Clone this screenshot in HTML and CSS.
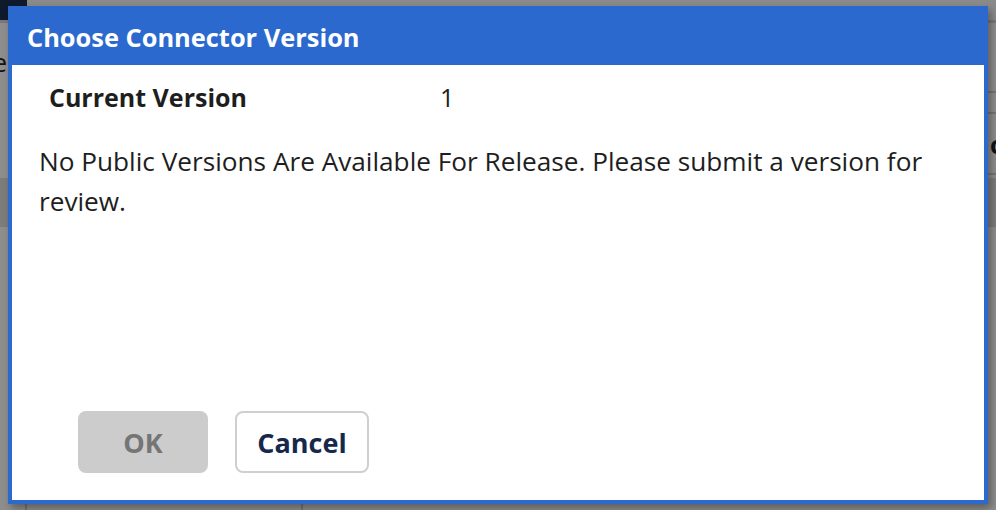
FILE: index.html
```html
<!DOCTYPE html>
<html>
<head>
<meta charset="utf-8">
<link rel="stylesheet" href="styles.css">
</head>
<body>
<div class="page">
  <div class="topbar">
    <div class="brand"></div>
    <div class="topfill"></div>
  </div>
  <div class="sub">
    <div class="subleft">e</div>
  </div>
  <div class="rows">
    <div class="row first"></div>
    <div class="row dark"></div>
    <div class="row"></div>
  </div>
  <div class="rightcol">
    <div class="rline"></div>
    <div class="rline"></div>
    <div class="rc">c</div>
    <div class="rline"></div>
  </div>
  <div class="bottomcols">
    <div class="bcol a"></div>
    <div class="bcol b"></div>
    <div class="bcol c"></div>
  </div>
</div>
<div class="overlay"></div>
<div class="dialog">
  <div class="dialog-header">Choose Connector Version</div>
  <div class="dialog-body">
    <div class="field">
      <span class="label">Current Version</span>
      <span class="value">1</span>
    </div>
    <p class="message">No Public Versions Are Available For Release. Please submit a version for review.</p>
  </div>
  <div class="dialog-footer">
    <button class="btn btn-ok" disabled>OK</button>
    <button class="btn btn-cancel">Cancel</button>
  </div>
</div>
</body>
</html>
```
FILE: styles.css
```css
html, body {
  margin: 0;
  padding: 0;
  width: 996px;
  height: 510px;
  overflow: hidden;
  font-family: "Open Sans", "Noto Sans", sans-serif;
}
.page {
  width: 996px;
  height: 510px;
  background: #f4f4f4;
  position: relative;
}
.topbar {
  display: flex;
  height: 20px;
}
.brand {
  width: 27px;
  background: #1c2d4f;
}
.topfill {
  flex: 1;
  background: #f0f0f0;
}
.sub {
  height: 88px;
  border-top: 3px solid #d0d0d0;
  font-size: 25px;
  color: #222;
}
.subleft {
  padding-top: 22px;
  margin-left: -7px;
}
.rows .row {
  height: 50px;
}
.rows .first {
  height: 67px;
}
.rows .dark {
  height: 49px;
  background: #d8d8d8;
}
.rightcol {
  position: absolute;
  right: 0;
  top: 91px;
  width: 8px;
  font-size: 25px;
  font-weight: 700;
  color: #222;
}
.rline {
  height: 2px;
  background: #ccc;
  margin-bottom: 19px;
}
.rc {
  margin-left: 2px;
  line-height: 22px;
  margin-bottom: 18px;
}
.bottomcols {
  position: absolute;
  left: 0;
  right: 0;
  bottom: 0;
  height: 40px;
  display: flex;
}
.bcol {
  border-left: 2px solid #c8c8c8;
}
.bcol.a {
  width: 25px;
  border-left: 0;
}
.bcol.b {
  width: 274px;
}
.bcol.c {
  flex: 1;
}
.overlay {
  position: absolute;
  inset: 0;
  background: rgba(0, 0, 0, 0.42);
}
.dialog {
  position: absolute;
  left: 8px;
  top: 6px;
  width: 972px;
  height: 494px;
  border: 4px solid #2b69cf;
  border-top: 0;
  background: #fff;
  box-shadow: 3px 4px 8px rgba(0, 0, 0, 0.35);
  display: flex;
  flex-direction: column;
}
.dialog-header {
  background: #2b69cf;
  color: #fff;
  font-weight: 700;
  font-size: 25.4px;
  height: 59px;
  line-height: 63px;
  margin: 0 -4px;
  padding-left: 19px;
}
.dialog-body {
  flex: 1;
  padding: 0 40px 0 27px;
}
.field {
  display: flex;
  align-items: center;
  height: 64px;
  font-size: 25px;
  color: #1e1e1e;
}
.label {
  font-weight: 700;
  width: 391px;
  padding-left: 10px;
}
.value {
  font-weight: 400;
}
.message {
  margin: 0;
  padding-top: 12px;
  font-size: 26.2px;
  line-height: 40px;
  color: #1e1e1e;
}
.dialog-footer {
  display: flex;
  gap: 27px;
  padding: 0 0 27px 66px;
}
.btn {
  height: 62px;
  border-radius: 8px;
  font-family: "Open Sans", "Noto Sans", sans-serif;
  font-weight: 700;
  font-size: 27px;
  padding: 0;
}
.btn-ok {
  width: 130px;
  background: #cccccc;
  border: 0;
  color: #757575;
}
.btn-cancel {
  width: 134px;
  background: #fff;
  border: 2px solid #cfcfcf;
  color: #16294d;
}
```
